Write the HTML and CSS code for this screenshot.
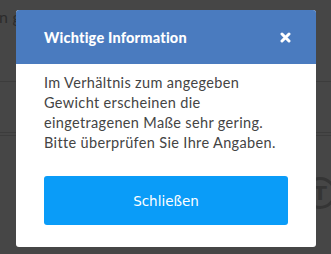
FILE: index.html
```html
<!DOCTYPE html>
<html lang="de">
<head>
<meta charset="utf-8">
<title>Wichtige Information</title>
<link rel="stylesheet" href="styles.css">
</head>
<body>
<div class="page">
  <div class="page-head">n geringen Gewicht berechnet werden ist</div>
  <div class="page-rule rule-a"></div>
  <div class="page-rule rule-b"></div>
  <div class="page-rule rule-c"></div>
  <div class="page-icon">T</div>
</div>
<div class="modal">
  <div class="modal-header">
    <span class="modal-title">Wichtige Information</span>
    <svg class="modal-close" width="11" height="11" viewBox="0 0 11 11" aria-label="Schließen">
      <path d="M2 2 L9 9 M9 2 L2 9" stroke="#fff" stroke-width="3" stroke-linecap="round"/>
    </svg>
  </div>
  <div class="modal-body">
    <p class="modal-text">Im Verhältnis zum angegeben Gewicht erscheinen die eingetragenen Maße sehr gering. Bitte überprüfen Sie Ihre Angaben.</p>
    <button class="modal-button">Schließen</button>
  </div>
</div>
</body>
</html>
```
FILE: styles.css
```css
html, body {
  margin: 0;
  padding: 0;
}
body {
  width: 331px;
  height: 254px;
  background: #464646;
  overflow: hidden;
  position: relative;
  font-family: Lato, "Open Sans", sans-serif;
}
.page {
  height: 100%;
  display: flex;
  flex-direction: column;
}
.page-head {
  margin: 7px 0 0 -1px;
  font-size: 16px;
  line-height: 20px;
  color: #2c2c2c;
  white-space: nowrap;
  letter-spacing: 0.2px;
}
.page-rule {
  height: 1px;
  background: #3c3c3c;
}
.rule-a { margin-top: 54px; }
.rule-b { margin-top: 50px; }
.rule-c { margin-top: 2px; }
.page-icon {
  position: absolute;
  left: 304px;
  top: 177px;
  width: 26px;
  height: 26px;
  border: 3px solid #353535;
  border-radius: 50%;
  color: #353535;
  font: bold 20px/26px "DejaVu Sans", sans-serif;
  text-align: center;
}
.modal {
  position: absolute;
  left: 16px;
  top: 10px;
  width: 300px;
  height: 237px;
  background: #fff;
  border-radius: 3px;
  overflow: hidden;
  display: flex;
  flex-direction: column;
}
.modal-header {
  height: 54px;
  background: #4a7bbf;
  display: flex;
  align-items: center;
  justify-content: space-between;
  padding: 0 25px 0 28px;
}
.modal-title {
  color: #fff;
  font-weight: 900;
  font-size: 14.5px;
  letter-spacing: 0.2px;
}
.modal-close {
  display: block;
}
.modal-body {
  padding: 9px 28px 0 28px;
}
.modal-text {
  margin: 0;
  font-size: 14.5px;
  line-height: 20px;
  color: #444;
  letter-spacing: 0.35px;
}
.modal-button {
  display: block;
  width: 244px;
  height: 49px;
  margin-top: 23px;
  border: 0;
  border-radius: 3px;
  background: #0a9cf8;
  color: #fff;
  font-family: "DejaVu Sans", Verdana, sans-serif;
  font-size: 13.5px;
  padding: 0;
}
```
